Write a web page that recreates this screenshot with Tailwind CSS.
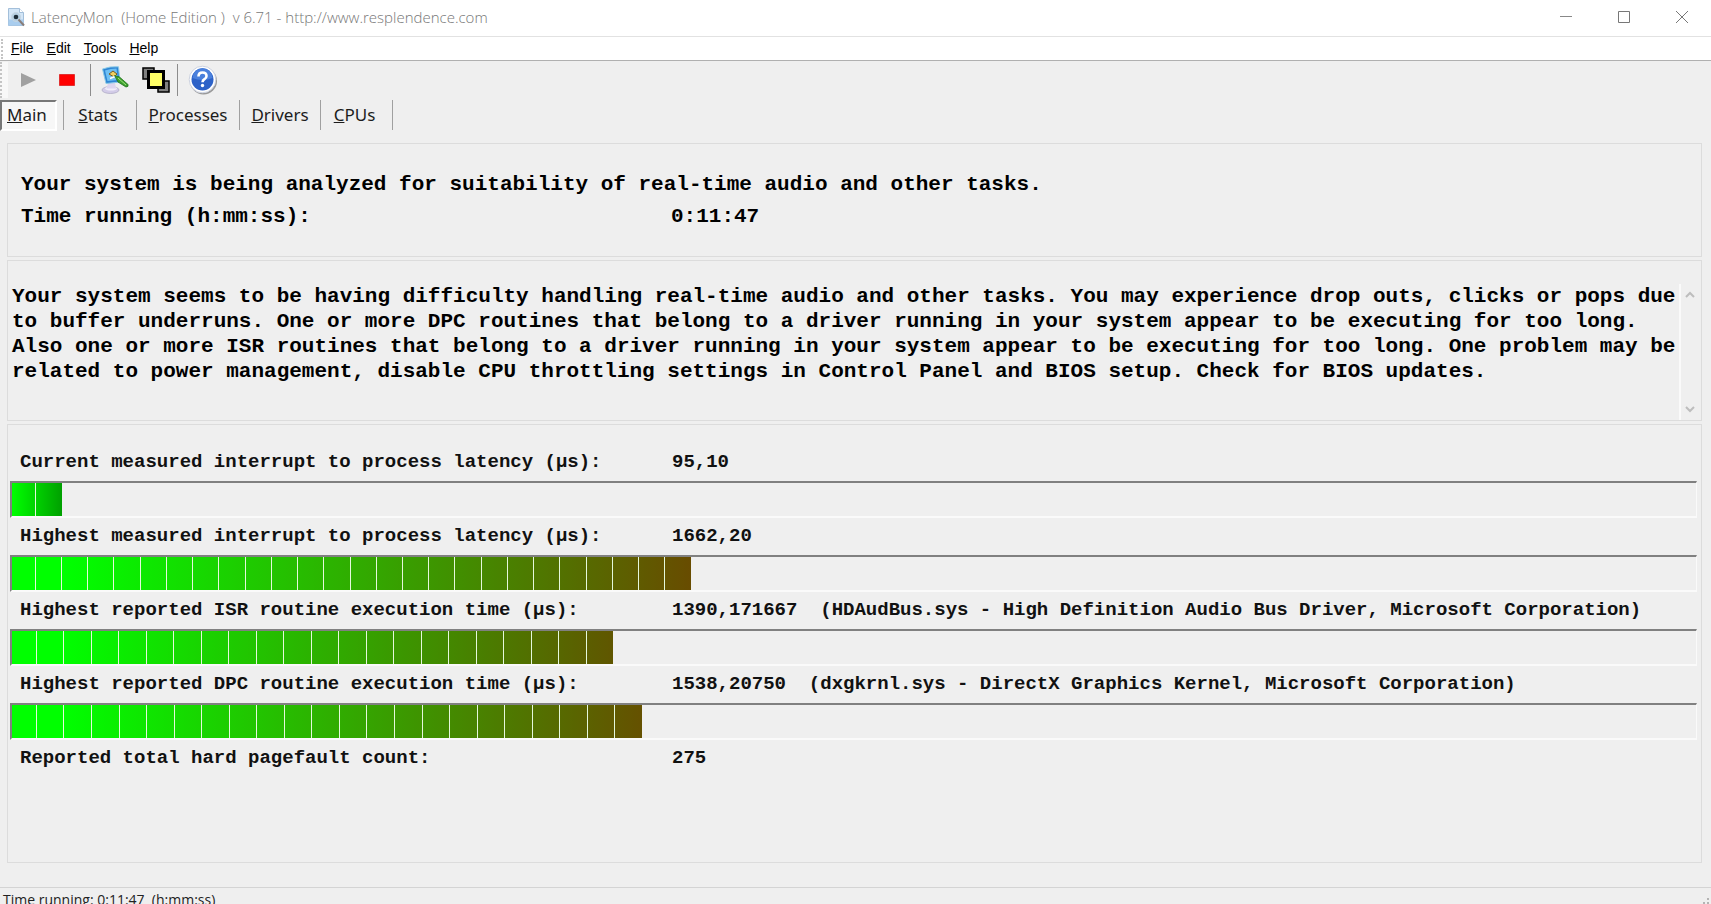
<!DOCTYPE html>
<html lang="en">
<head>
<meta charset="utf-8">
<title>LatencyMon</title>
<script src="https://cdn.jsdelivr.net/npm/@tailwindcss/browser@4"></script>
</head>
<body class="h-screen overflow-hidden flex flex-col bg-[#efefef] text-black font-['Open_Sans',sans-serif]">
<header class="h-9 shrink-0 flex items-center bg-white pl-2 pb-0.5 text-[#777]">
  <svg class="w-[17px] h-[19px] shrink-0" viewBox="0 0 17 19" aria-hidden="true">
    <path d="M.5.500h11l4 4v13H.5z" fill="#d3e6f7" stroke="#a3bfda"/>
    <path d="M.5 11.500h15v6H.5z" fill="#a9cdee"/>
    <path d="M11.500.500v4h4" fill="#fff" stroke="#a3bfda"/>
    <circle cx="8" cy="9" r="4.500" fill="#b5cfe2" stroke="#c5d5e2"/><circle cx="8" cy="9" r="2.300" fill="#1c2c38"/>
    <path d="M10.500 11.500l5.500 6" stroke="#8a7d78" stroke-width="2"/>
  </svg>
  <h1 class="ml-1.5 text-[15px] font-light whitespace-pre">LatencyMon  (Home Edition )  v 6.71 - http://www.resplendence.com</h1>
  <div class="ml-auto flex h-full">
    <button aria-label="Minimize" class="w-[58px] grid place-items-center"><svg class="w-3 h-3" viewBox="0 0 12 12"><path d="M0 5.500h12" stroke="#888"/></svg></button>
    <button aria-label="Maximize" class="w-[58px] grid place-items-center"><svg class="w-3 h-3" viewBox="0 0 12 12"><path d="M.5.500h11v11H.5z" fill="none" stroke="#777"/></svg></button>
    <button aria-label="Close" class="w-[58px] grid place-items-center"><svg class="w-3 h-3" viewBox="0 0 12 12"><path d="M0 0l12 12M12 0L0 12" stroke="#777"/></svg></button>
  </div>
</header>
<nav aria-label="Menu" class="h-[25px] shrink-0 flex items-center gap-[13px] bg-white border-t border-t-[#e2e2e2] border-b border-b-[#b0b0b0] pl-px text-[14px] font-['Liberation_Sans',sans-serif]">
  <span class="h-5 -mr-[5px] border-l-2 border-dotted border-[#c4c4c4]"></span>
  <button><u>F</u>ile</button>
  <button><u>E</u>dit</button>
  <button><u>T</u>ools</button>
  <button><u>H</u>elp</button>
</nav>
<div role="toolbar" aria-label="Tools" class="h-[38px] shrink-0 flex items-center">
  <span class="h-9 w-2 bg-[#f8f8f8] border-l-2 border-dotted border-[#c4c4c4]"></span>
  <button aria-label="Start" class="w-[39px] h-8 grid place-items-center"><svg class="w-4 h-4" viewBox="0 0 16 16"><path d="M1 1l15 7-15 7z" fill="#a0a0a0"/></svg></button>
  <button aria-label="Stop" class="w-[39px] h-8 grid place-items-center"><svg class="w-4 h-3" viewBox="0 0 16 12"><path d="M.5.500h15v11H.5z" fill="#f00" stroke="#e03030"/></svg></button>
  <span class="ml-1 w-px h-8 bg-[#8c8c8c]"></span>
  <button aria-label="Options" class="ml-2 w-8 h-8 grid place-items-center">
    <svg class="w-7 h-7" viewBox="0 0 28 28">
      <ellipse cx="9.500" cy="24" rx="8.500" ry="3.500" fill="#d3cce8" stroke="#aaa6c2" stroke-width=".7"/>
      <ellipse cx="10" cy="22.500" rx="6" ry="2" fill="#f1edfa"/>
      <path d="M7 17h7l1 5.500H5.500z" fill="#dcd5ef"/>
      <path d="M1.500 3Q9 0 17.500.800L19 16 5 17.500z" fill="#2f86d4" stroke="#8ccbe8"/>
      <path d="M4 4.500q6-2 11.500-2l1.500 11.500-10.500 1z" fill="#6fc0f3"/>
      <path d="M8 8l4-3 4 3-3 3z" fill="#f0d060" stroke="#7b5a20"/>
      <path d="M9 12.500l5-2 3 3" fill="none" stroke="#fff" stroke-width="1.500"/>
      <path d="M13.500 9.500l5 1.500 8.500 7.500q.8 2.500-2 2.500l-8-5z" fill="#3ba02d" stroke="#1f6e1b" stroke-width=".8"/>
      <path d="M17 12l8 7" stroke="#9fe07a"/>
    </svg>
  </button>
  <button aria-label="Windows" class="ml-2 w-[34px] h-8 grid place-items-center">
    <svg class="w-7 h-[26px]" viewBox="0 0 28 26">
      <path d="M1 1h11v11H1zM16 14h11v11H16z" fill="#808080" stroke="#000" stroke-width="1.500"/>
      <path d="M6.500 4.500h15v16h-15z" fill="#ffff66" stroke="#000" stroke-width="3"/>
    </svg>
  </button>
  <span class="ml-1 w-px h-8 bg-[#8c8c8c]"></span>
  <button aria-label="Help" class="ml-2 w-[34px] h-8 grid place-items-center">
    <svg class="w-[30px] h-[30px]" viewBox="0 0 30 30">
      <circle cx="15.500" cy="16" r="13.500" fill="#9a9a9a"/><circle cx="14.500" cy="14.500" r="13.300" fill="#fff" stroke="#ccd2e0"/>
      <circle cx="14.500" cy="14.500" r="11" fill="#2d62c8"/><path d="M4.500 13a10 10 0 0120 0q-10 4-20 0z" fill="#4a80dc"/>
      <path d="M10.500 11.500q0-4 4-4t4 3.500q0 2-2 3.200t-2 3" fill="none" stroke="#fff" stroke-width="2.600"/><circle cx="14.500" cy="20.500" r="1.700" fill="#fff"/>
    </svg>
  </button>
</div>
<div role="tablist" class="h-8 shrink-0 flex items-center text-[17px] font-['Noto_Sans',sans-serif] text-[#1c1c1c]">
  <button role="tab" aria-selected="true" class="w-[57px] h-[31px] text-left pl-[5px] bg-[#f7f7f7] border-2 border-t-[#777] border-l-[#777] border-r-white border-b-white"><u>M</u>ain</button>
  <button role="tab" class="ml-[6px] w-[74px] h-[30px] pr-1 border-l border-r border-[#a0a0a0]"><u>S</u>tats</button>
  <button role="tab" class="w-[103px] h-[30px] border-r border-[#a0a0a0]"><u>P</u>rocesses</button>
  <button role="tab" class="w-[81px] h-[30px] border-r border-[#a0a0a0]"><u>D</u>rivers</button>
  <button role="tab" class="w-[72px] h-[30px] pr-1 border-r border-[#a0a0a0]"><u>C</u>PUs</button>
</div>
<main class="flex-1 min-h-0 flex flex-col gap-[3px] pt-3 pl-[7px] pr-[9px] pb-6 font-['Liberation_Mono',monospace] font-bold">
  <section class="h-[114px] shrink-0 border border-[#dcdcdc] pl-[13px] pt-[25px] text-[21px] leading-8 whitespace-nowrap">
    <p>Your system is being analyzed for suitability of real-time audio and other tasks.</p>
    <dl class="flex"><dt class="w-[650px]">Time running (h:mm:ss):</dt><dd>0:11:47</dd></dl>
  </section>
  <section class="h-[161px] shrink-0 border border-[#dcdcdc] pl-1 pt-[23px] flex text-[21px] leading-[25px]">
    <p class="flex-1 whitespace-nowrap">Your system seems to be having difficulty handling real-time audio and other tasks. You may experience drop outs, clicks or pops due<br>to buffer underruns. One or more DPC routines that belong to a driver running in your system appear to be executing for too long.<br>Also one or more ISR routines that belong to a driver running in your system appear to be executing for too long. One problem may be<br>related to power management, disable CPU throttling settings in Control Panel and BIOS setup. Check for BIOS updates.</p>
    <div class="w-[22px] flex flex-col justify-between items-start pl-1 border-l-2 border-[#fafafa] py-1.5">
      <button aria-label="Scroll up"><svg class="w-[10px] h-[10px]" viewBox="0 0 10 10"><path d="M1 7l4-4 4 4" fill="none" stroke="#bdbdbd" stroke-width="2"/></svg></button>
      <button aria-label="Scroll down"><svg class="w-[10px] h-[10px]" viewBox="0 0 10 10"><path d="M1 3l4 4 4-4" fill="none" stroke="#bdbdbd" stroke-width="2"/></svg></button>
    </div>
  </section>
  <section id="readings" class="flex-1 border border-[#dcdcdc] pt-[19px] pl-[2px] pr-1 text-[19px] leading-[37px] text-[#111] whitespace-pre"></section>
</main>
<footer class="h-[17px] shrink-0 flex justify-between border-t border-[#d4d4d4] pl-[3px] pt-px text-[14px] leading-[22px] text-[#222] whitespace-pre"><span>Time running: 0:11:47  (h:mm:ss)</span><svg class="w-3 h-4" viewBox="0 0 12 16"><path d="M8 9h2v2H8zM4 13h2v2H4zM8 13h2v2H8z" fill="#b4b4b4"/></svg></footer>
<script>
const rows = [
  ["Current measured interrupt to process latency (µs):", "95,10", 2, 2.94, "bg-linear-to-r/srgb from-[#00ff00] to-[#00a000]"],
  ["Highest measured interrupt to process latency (µs):", "1662,20", 26, 40.3, "bg-linear-to-r/srgb from-[#00ff00] from-8% to-[#684c00]"],
  ["Highest reported ISR routine execution time (µs):", "1390,171667  (HDAudBus.sys - High Definition Audio Bus Driver, Microsoft Corporation)", 22, 35.7, "bg-linear-to-r/srgb from-[#00ff00] from-8% to-[#605600]"],
  ["Highest reported DPC routine execution time (µs):", "1538,20750  (dxgkrnl.sys - DirectX Graphics Kernel, Microsoft Corporation)", 23, 37.4, "bg-linear-to-r/srgb from-[#00ff00] from-8% to-[#655100]"],
  ["Reported total hard pagefault count:", "275", 0]
];
document.getElementById("readings").innerHTML = rows.map(([label, value, count, width, fill]) =>
  `<div class="flex pl-[10px]"><span class="w-[652px] shrink-0">${label}</span><span>${value}</span></div>` +
  (count ? `<div role="progressbar" aria-label="${label}" aria-valuenow="${width}" class="h-[37px] border-2 border-r-1 border-t-[#808080] border-l-[#808080] border-r-[#fafafa] border-b-[#fafafa]"><div class="h-full flex ${fill}" style="width:${width}%">` +
  `<i class="flex-1 first:flex-[0.9] border-r last:border-r-0 border-[#e5f8dc]"></i>`.repeat(count) + `</div></div>` : "")
).join("");
</script>
</body>
</html>
